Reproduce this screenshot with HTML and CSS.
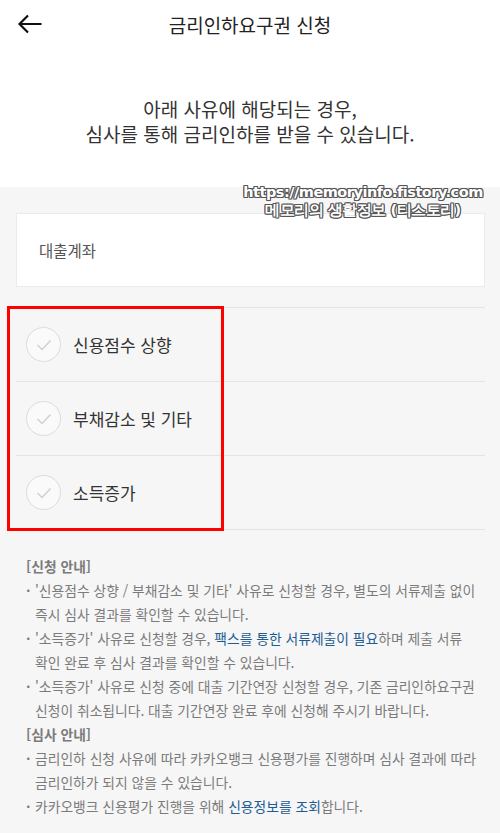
FILE: index.html
```html
<!DOCTYPE html>
<html lang="ko">
<head>
<meta charset="utf-8">
<link rel="stylesheet" href="styles.css">
</head>
<body>
<div class="page">
  <header class="topbar">
    <svg class="back" width="26" height="20" viewBox="0 0 26 20"><path d="M24.5 10H2.5M11 1.5L2.5 10L11 18.5" fill="none" stroke="#111" stroke-width="2.2" stroke-linecap="butt" stroke-linejoin="miter"/></svg>
    <h1 class="title">금리인하요구권 신청</h1>
  </header>
  <section class="intro">
    <p>아래 사유에 해당되는 경우,<br>심사를 통해 금리인하를 받을 수 있습니다.</p>
  </section>
  <main class="body">
    <div class="account">대출계좌</div>
    <ul class="reasons">
      <li class="reason"><span class="check"><svg width="16" height="12" viewBox="0 0 16 12"><path d="M1.5 6L6 10.5L14.5 1.5" fill="none" stroke="#cfcfcf" stroke-width="1.4"/></svg></span>신용점수 상향</li>
      <li class="reason"><span class="check"><svg width="16" height="12" viewBox="0 0 16 12"><path d="M1.5 6L6 10.5L14.5 1.5" fill="none" stroke="#cfcfcf" stroke-width="1.4"/></svg></span>부채감소 및 기타</li>
      <li class="reason"><span class="check"><svg width="16" height="12" viewBox="0 0 16 12"><path d="M1.5 6L6 10.5L14.5 1.5" fill="none" stroke="#cfcfcf" stroke-width="1.4"/></svg></span>소득증가</li>
      <div class="highlight"></div>
    </ul>
    <div class="notes">
      <p class="head">[신청 안내]</p>
      <p class="item">'신용점수 상향 / 부채감소 및 기타' 사유로 신청할 경우, 별도의 서류제출 없이 즉시 심사 결과를 확인할 수 있습니다.</p>
      <p class="item">'소득증가' 사유로 신청할 경우, <span class="link">팩스를 통한 서류제출이 필요</span>하며 제출 서류 확인 완료 후 심사 결과를 확인할 수 있습니다.</p>
      <p class="item">'소득증가' 사유로 신청 중에 대출 기간연장 신청할 경우, 기존 금리인하요구권 신청이 취소됩니다. 대출 기간연장 완료 후에 신청해 주시기 바랍니다.</p>
      <p class="head">[심사 안내]</p>
      <p class="item">금리인하 신청 사유에 따라 카카오뱅크 신용평가를 진행하며 심사 결과에 따라 금리인하가 되지 않을 수 있습니다.</p>
      <p class="item">카카오뱅크 신용평가 진행을 위해 <span class="link">신용정보를 조회</span>합니다.</p>
    </div>
  </main>
  <div class="watermark">https://memoryinfo.fistory.com<br>메모리의 생활정보 (티스토리)</div>
</div>
</body>
</html>
```
FILE: styles.css
```css
* { box-sizing: border-box; margin: 0; padding: 0; }
html, body { width: 500px; height: 833px; overflow: hidden; }
body {
  font-family: "Noto Sans CJK KR", "Noto Sans", sans-serif;
  background: #f6f6f6;
  color: #333;
}
.page { position: relative; width: 500px; min-height: 833px; }
.topbar {
  position: relative;
  height: 48px;
  background: #fff;
  display: flex;
  align-items: center;
  justify-content: center;
}
.back { position: absolute; left: 17px; top: 14px; }
.title { font-size: 19px; font-weight: 400; color: #222; }
.intro {
  background: #fff;
  height: 139px;
  padding-top: 48px;
  text-align: center;
}
.intro p { font-size: 19px; line-height: 25px; color: #333; }
.body { padding: 26px 15px 0 16px; }
.account {
  height: 74px;
  background: #fff;
  border: 1px solid #ebebeb;
  display: flex;
  align-items: center;
  padding-left: 22px;
  font-size: 15.5px;
  color: #555;
}
.reasons { position: relative; list-style: none; margin-top: 20px; border-top: 1px solid #e4e4e4; }
.reason {
  height: 74px;
  border-bottom: 1px solid #e4e4e4;
  display: flex;
  align-items: center;
  padding-left: 10px;
  font-size: 17px;
  color: #333;
}
.check {
  width: 35px; height: 35px;
  border-radius: 50%;
  border: 1px solid #dcdcdc;
  background: #fafafa;
  display: flex; align-items: center; justify-content: center;
  margin-right: 12px;
}
.highlight {
  position: absolute;
  left: -9px; top: -2px;
  width: 217px; height: 225px;
  border: 3px solid #ff0000;
}
.notes {
  padding: 24px 0 0 10px;
  font-size: 13.8px;
  line-height: 24px;
  color: #7b7b7b;
  word-break: keep-all;
}
.notes .head { font-weight: 700; color: #7b7b7b; }
.notes .item { position: relative; padding-left: 9px; }
.notes .item::before { content: "·"; position: absolute; left: 0; top: 0; font-weight: 700; }
.link { color: #1d5c93; }
.watermark {
  position: absolute;
  left: 236px; top: 183px;
  width: 254px;
  text-align: center;
  font-family: "DejaVu Sans", sans-serif;
  font-weight: 700;
  font-size: 14.5px;
  line-height: 18px;
  color: #fff;
  letter-spacing: -0.5px;
  text-shadow: -1px -1px 0 #555, 1px -1px 0 #555, -1px 1px 0 #555, 1px 1px 0 #555, 0 1px 0 #555, 0 -1px 0 #555, 1px 0 0 #555, -1px 0 0 #555;
}
```
